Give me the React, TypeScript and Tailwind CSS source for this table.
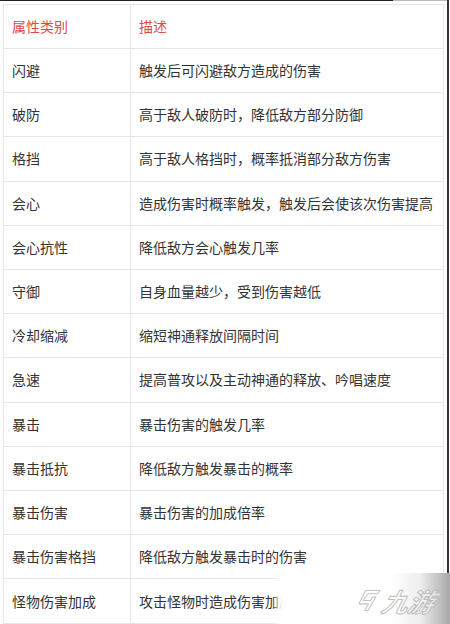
import React from "react";

const rows: [string, string][] = [
  ["闪避", "触发后可闪避敌方造成的伤害"],
  ["破防", "高于敌人破防时，降低敌方部分防御"],
  ["格挡", "高于敌人格挡时，概率抵消部分敌方伤害"],
  ["会心", "造成伤害时概率触发，触发后会使该次伤害提高"],
  ["会心抗性", "降低敌方会心触发几率"],
  ["守御", "自身血量越少，受到伤害越低"],
  ["冷却缩减", "缩短神通释放间隔时间"],
  ["急速", "提高普攻以及主动神通的释放、吟唱速度"],
  ["暴击", "暴击伤害的触发几率"],
  ["暴击抵抗", "降低敌方触发暴击的概率"],
  ["暴击伤害", "暴击伤害的加成倍率"],
  ["暴击伤害格挡", "降低敌方触发暴击时的伤害"],
  ["怪物伤害加成", "攻击怪物时造成伤害加成"],
];

export default function App() {
  return (
    <div
      className="relative w-[450px] h-[624px] overflow-hidden bg-white"
      style={{ fontFamily: '"Noto Sans CJK SC", "Noto Sans", sans-serif' }}
    >
      <div className="absolute left-0 top-0 h-[1px] w-[393px] bg-[#222]" />
      <div className="absolute left-[393px] top-0 h-[1px] w-[54px] bg-[#bbb]" />
      <div className="absolute right-[1px] top-0 h-full w-[2px] bg-[#333]" />
      <div className="ml-[3px] mt-[4px] w-[441px] border border-[#e6e6e6] text-[14px] text-[#333]">
        <div className="grid grid-cols-[127px_1fr] h-[44px] border-b border-[#e6e6e6]">
          <div className="flex items-center pl-[8px] border-r border-[#e6e6e6] text-[#dc4a47]">属性类别</div>
          <div className="flex items-center pl-[8px] text-[#dc4a47]">描述</div>
        </div>
        {rows.map(([a, b], i) => (
          <div
            key={i}
            className={`grid grid-cols-[127px_1fr] h-[44.2px] ${i < rows.length - 1 ? "border-b border-[#e6e6e6]" : ""}`}
          >
            <div className="flex items-center pl-[8px] border-r border-[#e6e6e6] whitespace-nowrap">{a}</div>
            <div className="flex items-center pl-[8px] whitespace-nowrap overflow-hidden">{b}</div>
          </div>
        ))}
      </div>
      <div className="absolute left-[272px] top-[573px] w-[178px] h-[51px] bg-[linear-gradient(to_right,rgba(255,255,255,0)_0px,#ffffff_10px,#ffffff_120px,#eeeeee_148px,#a8a8a8_178px)] flex items-center">
        <svg className="ml-[86px] mt-[4px]" width="23" height="23" viewBox="0 0 24 24" fill="none" stroke="#c4c4c4" strokeWidth="1.1" strokeLinejoin="round">
          <path d="M8 1.5 L23 1.5 L20.5 5 L10.5 5 L5.5 12 L13 12 L15 8.5 L18.5 8.5 L10.5 22.5 L7 22.5 L11 15.5 L1 15.5 Z" />
        </svg>
        <span
          className="ml-[2px] mt-[4px] text-[26px] font-bold italic leading-none"
          style={{ WebkitTextStroke: "1px #bdbdbd", color: "rgba(255,255,255,0.6)", transform: "skewX(-14deg)", display: "inline-block" }}
        >
          九游
        </span>
      </div>
    </div>
  );
}
